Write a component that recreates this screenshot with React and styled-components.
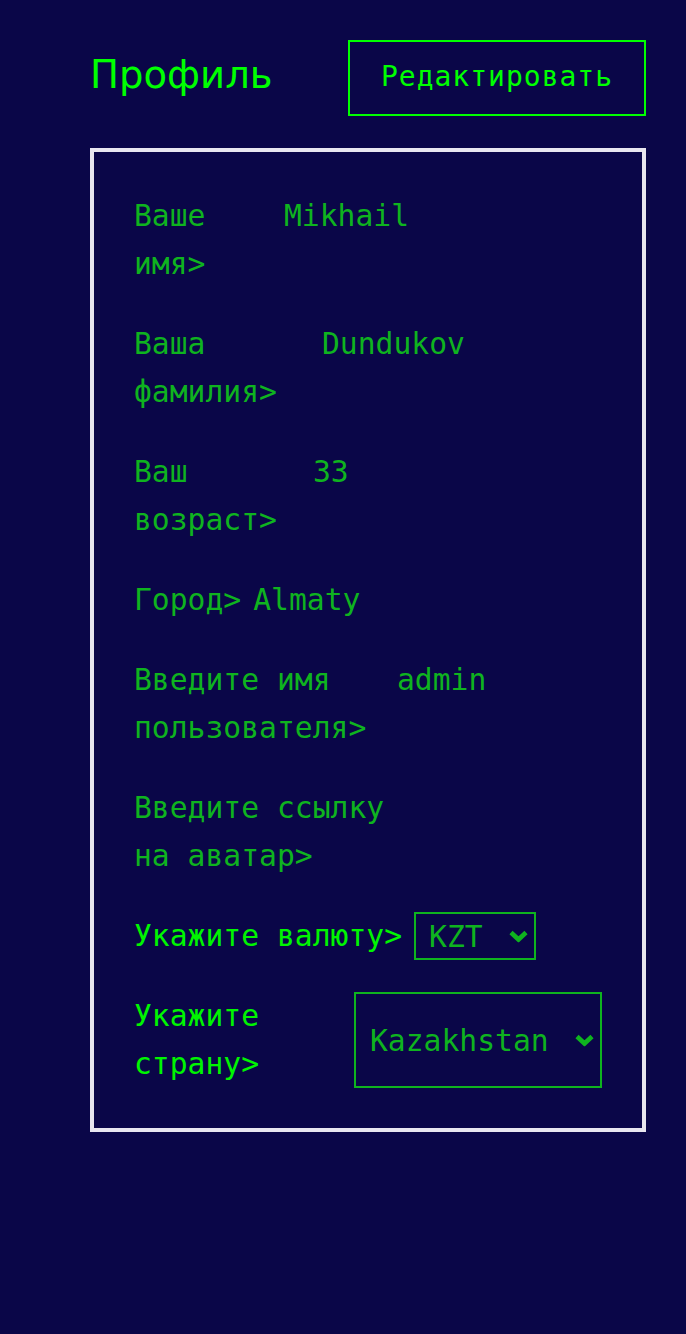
import React from "react";
import styled, { createGlobalStyle } from "styled-components";

const GlobalStyle = createGlobalStyle`
  html, body {
    margin: 0;
    padding: 0;
    background: #0a0648;
  }
  body {
    font-family: "DejaVu Sans Mono", monospace;
  }
`;

const Page = styled.main`
  min-height: 100vh;
  box-sizing: border-box;
  padding: 40px 40px 40px 90px;
  background: #0a0648;
`;

const Header = styled.header`
  display: flex;
  align-items: center;
  justify-content: space-between;
  margin-bottom: 32px;
`;

const Title = styled.h1`
  margin: 0 0 6px 0;
  font-family: "DejaVu Sans", sans-serif;
  font-weight: 400;
  font-size: 38.6px;
  line-height: 1.164;
  color: #00ff00;
`;

const EditButton = styled.button`
  width: 298px;
  height: 76px;
  box-sizing: border-box;
  background: transparent;
  border: 2px solid #00ff00;
  color: #00ff00;
  font-family: "DejaVu Sans Mono", monospace;
  font-size: 28px;
  letter-spacing: 1px;
  padding: 0 0 4px 0;
  cursor: pointer;
`;

const Card = styled.section`
  border: 4px solid #e8e6ef;
  padding: 40px;
  display: flex;
  flex-direction: column;
  gap: 32px;
`;

const Row = styled.div`
  display: flex;
  align-items: ${(p) => (p.$stretch ? "stretch" : "flex-start")};
  gap: 12px;
  font-size: 29.7px;
  line-height: 48px;
`;

const Label = styled.label`
  color: ${(p) => (p.$bright ? "#00f500" : "#0fb31f")};
  ${(p) => (p.$width ? `width: ${p.$width}px; flex: 0 0 ${p.$width}px;` : "flex: 0 1 auto;")}
`;

const Value = styled.span`
  color: #0fb31f;
  white-space: nowrap;
`;

const SelectWrap = styled.div`
  position: relative;
  display: flex;
  flex: 0 0 ${(p) => p.$width}px;
  width: ${(p) => p.$width}px;
  margin-left: ${(p) => (p.$push ? "auto" : "0")};
`;

const Select = styled.select`
  appearance: none;
  -webkit-appearance: none;
  width: 100%;
  box-sizing: border-box;
  background: transparent;
  border: 2px solid #0fb31f;
  border-radius: 0;
  color: #0fb31f;
  font-family: "DejaVu Sans Mono", monospace;
  font-size: 29.7px;
  padding: 0 0 0 ${(p) => p.$pad}px;
  margin: 0;
  outline: none;
`;

const Chevron = styled.svg`
  position: absolute;
  right: 8px;
  top: 50%;
  transform: translateY(-50%);
  pointer-events: none;
`;

const ChevronIcon = () => (
  <Chevron width="19" height="13" viewBox="0 0 19 13">
    <polyline
      points="2,3 9.5,10 17,3"
      fill="none"
      stroke="#0fb31f"
      strokeWidth="4.6"
      strokeLinecap="butt"
      strokeLinejoin="miter"
    />
  </Chevron>
);

const fields = [
  { label: "Ваше имя>", value: "Mikhail", width: 138 },
  { label: "Ваша фамилия>", value: "Dundukov", width: 176 },
  { label: "Ваш возраст>", value: "33", width: 167 },
  { label: "Город>", value: "Almaty" },
  { label: "Введите имя пользователя>", value: "admin", width: 251 },
  { label: "Введите ссылку на аватар>", value: "", width: 270 },
];

export default function App() {
  return (
    <>
      <GlobalStyle />
      <Page>
        <Header>
          <Title>Профиль</Title>
          <EditButton>Редактировать</EditButton>
        </Header>
        <Card>
          {fields.map((f) => (
            <Row key={f.label}>
              <Label $width={f.width}>{f.label}</Label>
              <Value>{f.value}</Value>
            </Row>
          ))}
          <Row $stretch>
            <Label $bright>Укажите валюту&gt;</Label>
            <SelectWrap $width={122}>
              <Select $pad={13} defaultValue="KZT">
                <option value="KZT">KZT</option>
                <option value="USD">USD</option>
                <option value="EUR">EUR</option>
              </Select>
              <ChevronIcon />
            </SelectWrap>
          </Row>
          <Row $stretch>
            <Label $bright>Укажите страну&gt;</Label>
            <SelectWrap $width={248} $push>
              <Select $pad={14} defaultValue="Kazakhstan">
                <option value="Kazakhstan">Kazakhstan</option>
                <option value="Russia">Russia</option>
              </Select>
              <ChevronIcon />
            </SelectWrap>
          </Row>
        </Card>
      </Page>
    </>
  );
}
